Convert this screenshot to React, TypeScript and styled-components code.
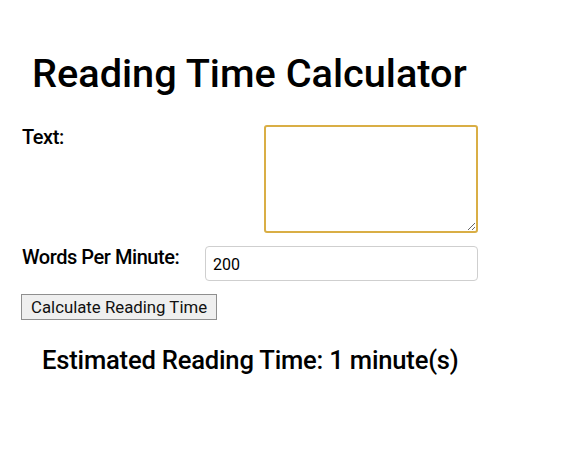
import React, { useState } from "react";
import styled, { createGlobalStyle } from "styled-components";

const GlobalStyle = createGlobalStyle`
	body {
		margin: 0;
		background: #ffffff;
		font-family: Roboto, "Noto Sans", sans-serif;
		color: #000;
	}
`;

const Page = styled.div`
	padding: 0 22px;
	width: 456px;
`;

const Title = styled.h1`
	font-size: 39.7px;
	font-weight: 500;
	margin: 0;
	padding: 51px 0 28px 10px;
	line-height: 46px;
`;

const Row = styled.div`
	display: flex;
	justify-content: space-between;
	align-items: flex-start;
	margin-bottom: 13px;
`;

const Label = styled.label<{ offset?: number }>`
	font-size: 20px;
	font-weight: 500;
	letter-spacing: -0.45px;
	line-height: 22px;
	padding-top: ${({ offset }) => offset ?? 1}px;
`;

const TextArea = styled.textarea`
	width: 214px;
	height: 108px;
	box-sizing: border-box;
	border: 2px solid #d9ae45;
	border-radius: 3px;
	outline: none;
	resize: both;
	font-family: Roboto, sans-serif;
	font-size: 16px;
	padding: 2px 3px;
	caret-color: #333;
`;

const NumberInput = styled.input`
	width: 273px;
	height: 35px;
	box-sizing: border-box;
	border: 1px solid #cfcfcf;
	border-radius: 4px;
	font-family: Roboto, sans-serif;
	font-size: 16px;
	padding: 2px 7px 0;
	outline: none;
`;

const Button = styled.button`
	font-family: Roboto, sans-serif;
	font-size: 16.8px;
	background: #efefef;
	border: 1px solid #8f8f8f;
	border-radius: 0;
	padding: 1px 9px;
	margin-left: -1px;
	height: 26px;
	color: #111;
`;

const Result = styled.h2`
	font-size: 25.6px;
	font-weight: 500;
	margin: 0;
	padding: 25px 0 0 20px;
	letter-spacing: -0.2px;
`;

export default function App() {
	const [text, setText] = useState("");
	const [wpm, setWpm] = useState("200");
	const [minutes, setMinutes] = useState(1);

	const calc = () => {
		const words = text.trim().split(/\s+/).filter(Boolean).length;
		setMinutes(Math.max(1, Math.ceil(words / (Number(wpm) || 200))));
	};

	return (
		<Page>
			<GlobalStyle />
			<Title>Reading Time Calculator</Title>
			<Row>
				<Label htmlFor="text">Text:</Label>
				<TextArea id="text" autoFocus value={text} onChange={(e) => setText(e.target.value)} />
			</Row>
			<Row>
				<Label htmlFor="wpm" offset={0}>Words Per Minute:</Label>
				<NumberInput id="wpm" type="number" value={wpm} onChange={(e) => setWpm(e.target.value)} />
			</Row>
			<Button onClick={calc}>Calculate Reading Time</Button>
			<Result>Estimated Reading Time: {minutes} minute(s)</Result>
		</Page>
	);
}
